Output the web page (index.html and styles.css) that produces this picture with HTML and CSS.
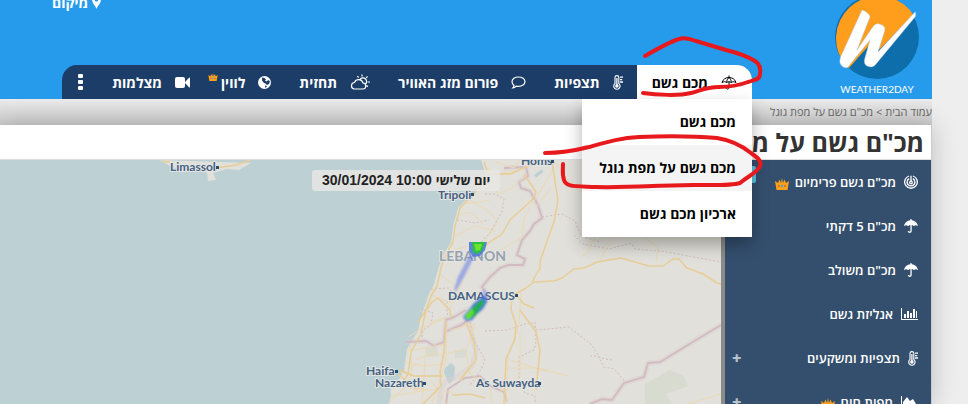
FILE: index.html
```html
<!DOCTYPE html>
<html lang="he" dir="rtl">
<head>
    <meta charset="UTF-8">
    <meta name="viewport" content="width=device-width, initial-scale=1.0">
    <title>מכ"ם גשם על מפת גוגל</title>
    <link rel="stylesheet" href="styles.css">
</head>
<body>
    <!-- shared icons -->
    <svg class="sprite" aria-hidden="true">
        <symbol id="crown" viewBox="0 0 14 12">
            <path fill="#f9a11b" d="M0 3l3 2 1.500-3.600L6 5l1-5 1 5 1.500-3.600L11 5l3-2-1.500 9h-11z"/>
            <circle cx="7" cy="8" r="1.200" fill="#4aa3df"/>
            <circle cx="4" cy="8" r="0.900" fill="#e2542c"/>
            <circle cx="10" cy="8" r="0.900" fill="#e2542c"/>
        </symbol>
        <symbol id="umbrella" viewBox="0 0 14 14">
            <path fill="currentColor" d="M6.400 0h1.200v1.300C11 1.600 13.500 4 14 7.200 12.800 6 11 6 9.800 7.200 9.300 6.600 8.600 6.200 7.700 6.100V12c0 2.600-3.900 2.600-3.900 0h1.300c0 1 1.300 1 1.300 0V6.100c-.9.100-1.700.5-2.200 1.100C3 6 1.200 6 0 7.200.500 4 3 1.600 6.400 1.300z"/>
        </symbol>
        <symbol id="thermo" viewBox="0 0 10 15">
            <path fill="none" stroke="currentColor" stroke-width="1.100" d="M2 8.500V2.500a1.900 1.900 0 0 1 3.800 0v6a3.200 3.200 0 1 1-3.800 0z"/>
            <circle cx="3.900" cy="11" r="1.800" fill="currentColor"/>
            <path stroke="currentColor" stroke-width="1.300" d="M3.900 3v8M7 2.200h3M7 4.600h2.200M7 7h3"/>
        </symbol>
    </svg>

    <div class="page">
        <header class="header">
            <a class="logo" href="#">
                <svg class="logo-mark" viewBox="0 5 84 79" aria-hidden="true">
                    <circle cx="42" cy="42" r="42" fill="#0d6eab"/>
                    <path fill="#ff9d1c" d="M12 72A42 42 0 1 1 75 15L78 20 45 54 36 48 14 73z"/>
                    <path fill="#fff" stroke="#b9cad6" stroke-width="0.500" d="M27 15c3 1 8 4 8 7L22 55 37 33c4-6 7-4 10-3 4 2 3 5 2 8l-6 19L80 17c1 1 1 3 0 5L41 69c-3 4-6 3-9 2-3-2-3-5-2-8l5-18L13 72c-2 2-5 0-7-2-2-3-1-6 0-9z"/>
                </svg>
                <span class="logo-name">WEATHER2DAY</span>
            </a>
            <div class="header-main">
                <a class="location" href="#">
                    <svg class="icon-pin" viewBox="0 0 9 14" aria-hidden="true"><path fill="#fff" fill-rule="evenodd" d="M4.500 14C3.500 11 0 8 0 4.500a4.500 4.500 0 0 1 9 0C9 8 5.500 11 4.500 14zM4.500 6.500a2 2 0 1 0 0-4 2 2 0 0 0 0 4z"/></svg>
                    מיקום
                </a>
                <nav class="nav">
                    <div class="nav-item active">
                        <a class="nav-link" href="#">
                            <svg width="16" height="15" viewBox="0 0 16 15" fill="none" stroke="currentColor" aria-hidden="true"><path d="M8 .5v2M1 7.500C2 4 5 2.500 8 2.500s6 1.500 7 5c-1.500-1-3.200-1-4.600 0-1.500-1-3.300-1-4.800 0-1.400-1-3.100-1-4.600 0zM5.600 7.500C5.800 5 7 3 8 2.500c1 .5 2.200 2.500 2.400 5M8 7v5.500c0 2-2.800 2-2.800 0"/></svg>
                            מכם גשם
                        </a>
                        <div class="dropdown">
                            <a href="#">מכם גשם</a>
                            <a class="current" href="#">מכם גשם על מפת גוגל</a>
                            <a href="#">ארכיון מכם גשם</a>
                        </div>
                    </div>
                    <a class="nav-link" href="#">
                        <svg width="10" height="15" aria-hidden="true"><use href="#thermo"/></svg>
                        תצפיות
                    </a>
                    <a class="nav-link" href="#">
                        <svg width="15" height="13" viewBox="0 0 15 13" fill="none" stroke="currentColor" stroke-width="1.200" aria-hidden="true"><path d="M7.500 1C11 1 14 3 14 5.700s-3 4.700-6.500 4.700c-.8 0-1.600-.1-2.300-.3C4.300 11.300 3 12 1.800 12c.8-.8 1.200-1.600 1.200-2.700C1.700 8.400 1 7.100 1 5.700 1 3 4 1 7.500 1z"/></svg>
                        פורום מזג האוויר
                    </a>
                    <a class="nav-link" href="#">
                        <svg width="20" height="16" viewBox="0 0 20 16" fill="none" stroke="currentColor" stroke-width="1.200" aria-hidden="true"><path d="M4 15h8.500a3 3 0 0 0 .5-6 4.500 4.500 0 0 0-8.500-.5A3.300 3.300 0 0 0 4 15zM10 5.500a3.600 3.600 0 1 1 5 5M12 .5v2M7.500 2l1 1.600M17.500 2.500l-1.300 1.300M17.500 8H20M16.500 11.500l1.300 1.200"/></svg>
                        תחזית
                    </a>
                    <a class="nav-link" href="#">
                        <svg width="13" height="13" viewBox="0 0 13 13" aria-hidden="true"><circle cx="6.500" cy="6.500" r="6.500" fill="#fff"/><path fill="#1c3d68" d="M4 1.500l2.500.5 1.500 1.500-1 1 1.500 1 2-1.500 1.500 1.500-1 2.500L9 9 7.500 7.500 6 7 4 4.500zM7 9.500l2 .5-1.500 2.300z"/></svg>
                        <span class="with-crown">לווין<svg class="crown-small" aria-hidden="true"><use href="#crown"/></svg></span>
                    </a>
                    <a class="nav-link" href="#">
                        <svg width="15" height="11" viewBox="0 0 15 11" fill="currentColor" aria-hidden="true"><rect width="10" height="11" rx="2"/><path d="M10 5l4-4.200q1-.5 1 .4v8.600q0 .9-1 .4L10 6z"/></svg>
                        מצלמות
                    </a>
                    <button class="more" type="button" aria-label="עוד">
                        <svg width="5" height="16" viewBox="0 0 5 16" fill="currentColor" aria-hidden="true"><rect width="5" height="4" rx="1"/><rect y="6" width="5" height="4" rx="1"/><rect y="12" width="5" height="4" rx="1"/></svg>
                    </button>
                </nav>
            </div>
        </header>

        <div class="breadcrumb"><a href="#">עמוד הבית</a> &gt; מכ"ם גשם על מפת גוגל</div>

        <div class="content">
            <h1>מכ"ם גשם על מפת גוגל</h1>
            <div class="columns">
                <aside class="sidebar">
                    <a href="#">
                        <svg width="14" height="14" viewBox="0 0 14 14" fill="none" stroke="currentColor" stroke-width="1.300" aria-hidden="true"><path d="M7 7V.7M9 1a6.300 6.300 0 1 1-4 0M5.200 3.600a3.900 3.900 0 1 0 3.600 0"/><circle cx="7" cy="7.500" r="1.300"/></svg>
                        <span>מכ"ם גשם פרימיום<svg class="crown" aria-hidden="true"><use href="#crown"/></svg></span>
                    </a>
                    <a href="#"><svg width="14" height="14" aria-hidden="true"><use href="#umbrella"/></svg>מכ"ם 5 דקתי</a>
                    <a href="#"><svg width="14" height="14" aria-hidden="true"><use href="#umbrella"/></svg>מכ"ם משולב</a>
                    <a href="#">
                        <svg width="17" height="12" viewBox="0 0 17 12" fill="currentColor" aria-hidden="true"><path d="M0 0h1v11h16v1H0zM3 6h2v4H3zM6 3h2v7H6zM9 5h2v5H9zM12 1h2v9h-2zM15 3h1v7h-1z"/></svg>
                        אנליזת גשם
                    </a>
                    <a href="#">
                        <svg width="10" height="15" aria-hidden="true"><use href="#thermo"/></svg>
                        תצפיות ומשקעים
                        <span class="plus">+</span>
                    </a>
                    <a href="#">
                        <svg width="17" height="12" viewBox="0 0 17 12" fill="currentColor" aria-hidden="true"><path d="M0 0h1v11h16v1H0zM2 10V6l4-5 3 4 3-2 3 5v2z"/></svg>
                        <span>מפות חום<svg class="crown" aria-hidden="true"><use href="#crown"/></svg></span>
                        <span class="plus">+</span>
                    </a>
                    <button class="toggle" type="button" aria-label="סגור תפריט"></button>
                </aside>

                <main class="map">
                    <svg class="map-canvas" viewBox="0 160 721 244" preserveAspectRatio="xMinYMin slice">
                        <defs>
                            <filter id="soft" x="-50%" y="-50%" width="200%" height="200%"><feGaussianBlur stdDeviation="1"/></filter>
                        </defs>
                        <rect y="160" width="721" height="600" fill="#bdd0d3"/>
                        <path class="land" d="M481 160l3 9 2 6-8 9-3 8-5 4-12 12-5 18-2 16-6 10-6 14-5 18-6 12-4 12-4 14-2 9-11 18-3 22-6 10-8 4 1 10-4 19v40h400V160z"/>
                        <path class="land" d="M160 160l10 6 18 6 16-1 3 2 1 8 8-1-3-7 14-4 12 1 12-7z"/>
                        <path fill="#d8dbd0" d="M645 384l25-14 14 6 4 10-22 8 6 10h-27z"/>
                        <path fill="#d8dbd0" d="M425 347l12 1 2 8-12 1zM455 350l12 0-2 8-10 0z"/>
                        <path fill="#bdd0d3" d="M445 368l6-5 4 4-1 12-5 5-3-7-2-4zM534 175l8-6 1 3-7 6z"/>

                        <g class="border-halo">
                            <path d="M504 168l22-1 2 9-9 6 2 6 9 3 8 14 4 13-8 6-4 7-8 9-5 15 8 4-2 6-15 0-8 3-10 9-8 10 7 12-10 6-6 12-12 8-14 6"/>
                            <path d="M406 342l20-1 8 5 10-4 2-22 8-3 12-7 5 22 5 20-4 14-14 10-12 5-5 8-2 15"/>
                            <path d="M590 404l12-5 10 1 12-17 20-6 4-14 12-1 41-25 20-12"/>
                        </g>
                        <g class="border-line">
                            <path d="M504 168l22-1 2 9-9 6 2 6 9 3 8 14 4 13-8 6-4 7-8 9-5 15 8 4-2 6-15 0-8 3-10 9-8 10 7 12-10 6-6 12-12 8-14 6"/>
                            <path d="M406 342l20-1 8 5 10-4 2-22 8-3 12-7"/>
                            <path d="M446 404l2-15 17-11 15-2 12 11 12 5 3 10"/>
                            <path d="M590 404l12-5 10 1 12-17 20-6 4-14 12-1 41-25 20-12"/>
                        </g>
                        <g class="district">
                            <path d="M457 220l18 3 14-3M485 194l10 0 9 5-2 13-13 22-10 10M542 217l20-3 13 7 6 15 20 6"/>
                            <path d="M574 235l9 9 26 5 22-6 4 6 26 2 60 11"/>
                            <path d="M431 289l18-1 5 7-8 9 2 13M424 310l9 3-2 12-8 5-1 8"/>
                            <path d="M470 322l5 20 10 18-4 10-11 15M485 331l22-1 24-8 6 8 32-3 10 8 12 9 9 14 12 2"/>
                            <path d="M535 322l1 20-2 8-15 7 0 20 6 16 10 3 1 12M590 356l8 0 6 11 10 2 14 16"/>
                        </g>
                        <g class="road minor">
                            <path d="M490 180l8 14 14-6 14-12M486 168l12 6 16-3M470 200l20 12 8 10-14 20-30 8M465 203l10 0 15-3M460 215l10-3 12 10M500 250l22-12 2-20 30-50M455 236l20-10 20 5M580 258l8-6 5-13 9-9M600 262l5-12 13-14M643 237l15 10-2 15M553 160l15 20 20 18M521 290l-2 35-11 30-2 50M510 360l38 12M462 282l-12 26M440 275l20 14M430 295l22 8 6-6"/>
                            <path d="M420 310l12 12 14-5M408 337l16-10 22-9M450 330l25-6-8 24-20 6M446 320l0 40-6 20-8 24M472 325l4 35-16 22M404 362l20 4 20-2M400 372l16 4 30 0M406 350l8 0 30-6M410 345l2 28-6 14-16 14M426 347l-4 57M396 382l18 8 22 0 10 14M430 380l10 12 14 0M492 404l-2-17-20-13-4-22M500 392l20-16 0-45M415 360l22-8 10 8M408 369l12-6M392 396l36-6M520 160l-6 8-18-6M535 208l16-20M568 376l-30-8-30 0"/>
                            <path d="M688 404l33-10"/>
                        </g>
                        <g class="road">
                            <path d="M484 162l4 12-8 12-8 10-12 12-5 18-2 16-7 12-5 14-4 18-6 10-5 14-3 14-2 10-10 18-3 22-6 10"/>
                            <path d="M488 174l22 0 18-8 28-8M552 160l3 22 3 18-4 22-8 22-6 18 0 6-8 14"/>
                            <path d="M462 262l14-8 14-12 12-8 8-14 22-20 4-8-12-18"/>
                            <path d="M512 296l14-8 8-6 20-1 8-3 12-9 10-1 13-6 24-4 28 8 14 0 10-7 6 0 8 9 16 6 14 9 14 4"/>
                            <path d="M516 296l-4 3-1 10 5 16-1 14-9 20-2 45M518 297l6 7 10 4M520 310l16 22 4 18-4 40"/>
                            <path d="M418 322l14-20 6-4 12 12 1 8M446 322l-2 30-4 20 1 14-18 18M466 322l8 20 2 18-16 20M400 370l14 6 28 0M398 374l16 14 10 0M452 395l18-1 15 4"/>
                        </g>
                        <path class="road" d="M162 161l12 2M216 168l20-3 14-5"/>

                        <g class="labels">
                            <text x="170" y="171">Limassol</text>
                            <text x="521" y="165">Homs</text>
                            <text x="438" y="199">Tripoli</text>
                            <text x="366" y="375">Haifa</text>
                            <text x="375" y="387">Nazareth</text>
                            <text x="476" y="387">As Suwayda</text>
                            <text x="448" y="300">DAMASCUS</text>
                            <text class="country" x="439" y="261">LEBANON</text>
                        </g>
                        <path fill="#2d4a68" d="M216 166h3v3h-3zM551 160h3v3h-3zM471 193h3v3h-3zM395 370h3v3h-3zM423 382h3v3h-3zM538 382h3v3h-3zM515 294h3v3h-3z"/>

                        <g filter="url(#soft)">
                            <path fill="#5970e8" opacity="0.500" d="M470 254l4 3-9 18-9 16-2-1 4-13z"/>
                            <path fill="#8088e0" opacity="0.400" d="M482 291l4-2 2 9-6 3z"/>
                            <path fill="#4668dd" opacity="0.900" d="M474 303l8-6 4-2 1 7-4 7-7 6-4 5-6 1-3-4z"/>
                            <path fill="#23ad55" d="M476 304l7-5 2 3-10 14-7 3-2-4z"/>
                            <path fill="#61e020" d="M472 308l2 5-4 6-4 0-1-3z"/>
                        </g>
                        <path fill="#4e79d6" opacity="0.900" d="M469 242h18l-2 8-5 6-7 1-4-6z"/>
                        <path fill="#2bc046" d="M472 242h13l-3 9-5 3-4-2z"/>
                        <path fill="#6ee22e" d="M474 244h8l-2 6-4 1z"/>
                    </svg>
                    <time class="stamp"><span>יום שלישי</span> 10:00 30/01/2024</time>
                </main>
            </div>
        </div>
    </div>

    <!-- red pen marks over the menu -->
    <svg class="marks" viewBox="0 0 968 404" fill="none" stroke="#e8191c" stroke-width="4" stroke-linecap="round" stroke-linejoin="round" aria-hidden="true">
        <path d="M645 56c12-7 25-14 34-17 6-2 12 0 17 2l30 9c12 3 21 6 29 11 5 3 6 8 5 14-1 5-6 5-12 7-8 3-18 5-29 5-14 0-19 4-28 6-12 3-35 2-48 0"/>
        <path d="M545 153c14 0 24-1 44-6 18-5 31-9 50-10 22-1 55-1 78 1 13 2 24 7 34 15 7 5 11 8 9 13-3 7-12 10-20 17-10 3-30 2-46 2-30 0-68 3-98 2-22-1-30 0-32-7-2-6-1-10-1-16"/>
    </svg>
</body>
</html>
```
FILE: styles.css
```css
* {
    margin: 0;
    padding: 0;
    box-sizing: border-box;
}

body {
    background-color: #eee;
    font-family: "Open Sans", "Noto Sans", sans-serif;
    overflow: hidden;
}

a {
    color: inherit;
    text-decoration: none;
}

button {
    border: none;
    background: none;
    color: inherit;
    cursor: pointer;
}

svg {
    flex-shrink: 0;
}

.sprite {
    display: none;
}

.page {
    display: flex;
    flex-direction: column;
    height: 100vh;
    margin-right: 36px;
}

/* header */
.header {
    position: relative;
    z-index: 2;
    display: flex;
    background-color: #279beb;
    color: #fff;
}

.logo {
    display: flex;
    flex-direction: column;
    align-items: center;
    width: 110px;
    margin-left: 70px;
}

.logo-mark {
    width: 84px;
    height: 79px;
}

.logo-name {
    font-family: Lato, sans-serif;
    font-size: 10px;
    line-height: 20px;
}

.header-main {
    flex: 1;
    display: flex;
    flex-direction: column;
    justify-content: space-between;
    margin-left: 62px;
}

.location {
    display: flex;
    align-items: center;
    align-self: flex-end;
    gap: 4px;
    height: 4px;
    margin-left: -10px;
    font-size: 14px;
    font-weight: 700;
}

.icon-pin {
    width: 9px;
    height: 14px;
}

.nav {
    display: flex;
    height: 34px;
    background-color: #1c3d68;
    border-radius: 15px 15px 0 0;
    font-size: 14px;
    font-weight: 700;
    white-space: nowrap;
}

.nav-item {
    position: relative;
}

.nav-link {
    display: flex;
    align-items: center;
    gap: 13px;
    height: 34px;
    padding: 0 14px;
}

.nav-item.active {
    background-color: #fff;
    color: #000;
    border-top-right-radius: 15px;
}

.nav-item .nav-link {
    padding: 0 15px;
}

.with-crown {
    display: flex;
    gap: 3px;
    margin-left: -10px;
}

.crown-small {
    width: 10px;
    height: 8px;
}

.more {
    flex: 1;
    display: flex;
    align-items: center;
    justify-content: center;
}

.dropdown {
    position: absolute;
    top: 100%;
    right: 0;
    width: 170px;
    background-color: #fff;
    box-shadow: 0 8px 16px rgba(0, 0, 0, 0.3);
}

.dropdown a {
    display: block;
    padding: 0 16px;
    line-height: 46px;
}

.dropdown .current {
    background-color: #f4f4f4;
}

.breadcrumb {
    height: 26px;
    background: linear-gradient(#ebebeb, #cbcbcb);
    color: #666;
    font-size: 11px;
    line-height: 25px;
}

/* content */
.content {
    flex: 1;
    display: flex;
    flex-direction: column;
    min-height: 0;
    border-right: 1px solid #c5ccd4;
    box-shadow: 0 0 25px rgba(0, 0, 0, 0.2);
}

h1 {
    height: 35px;
    padding: 0 7px;
    background-color: #fff;
    border-bottom: 1px solid #ddd;
    color: #333;
    font-size: 25px;
    font-weight: 700;
    line-height: 34px;
}

.columns {
    flex: 1;
    display: flex;
    min-height: 0;
}

.sidebar {
    position: relative;
    width: 206px;
    background-color: #344f6e;
    color: #fff;
    font-size: 13px;
    font-weight: 600;
}

.sidebar a {
    display: flex;
    align-items: center;
    gap: 8px;
    height: 44px;
    padding: 0 13px;
}

.crown {
    width: 14px;
    height: 12px;
    margin-right: 6px;
    vertical-align: middle;
}

.plus {
    margin-right: auto;
    margin-left: -6px;
    color: #b6c2ce;
    font-size: 16px;
    font-weight: 800;
}

.toggle {
    position: absolute;
    top: 6px;
    left: 0;
    width: 31px;
    height: 17px;
    background-color: #5bc0de;
    border-radius: 2px;
}

/* map */
.map {
    position: relative;
    flex: 1;
    border-right: 4px solid #8b8b8a;
    direction: ltr;
}

.map-canvas {
    display: block;
    width: 100%;
    height: 100%;
}

.land {
    fill: #e1e0da;
}

.border-halo path {
    fill: none;
    stroke: #dccfd3;
    stroke-width: 5;
    opacity: 0.5;
}

.border-line path {
    fill: none;
    stroke: #d2bcc2;
    stroke-width: 2;
}

.district path {
    fill: none;
    stroke: #d3bcc0;
    stroke-dasharray: 2 2;
}

.road,
.road path {
    fill: none;
    stroke: #e8cd96;
    stroke-width: 1.5;
    stroke-linejoin: round;
}

.road.minor path {
    stroke: #ead9b4;
    stroke-width: 1;
}

.labels {
    font-family: Lato, sans-serif;
    font-size: 12px;
    font-weight: 700;
    fill: #44607f;
    stroke: #e4e6e4;
    stroke-width: 2px;
    paint-order: stroke;
}

.labels .country {
    font-size: 14px;
    fill: #98a2ac;
}

.stamp {
    position: absolute;
    top: 10px;
    left: 312px;
    padding: 0 10px;
    background-color: rgba(232, 230, 228, 0.85);
    border-radius: 3px;
    color: #222;
    direction: rtl;
    font-family: "Liberation Sans", sans-serif;
    font-size: 14px;
    font-weight: 700;
    line-height: 21px;
}

.stamp span {
    font-family: "Open Sans", sans-serif;
    font-size: 13px;
}

.marks {
    position: absolute;
    top: 0;
    left: 0;
    z-index: 3;
    width: 968px;
    height: 404px;
    pointer-events: none;
}
```
